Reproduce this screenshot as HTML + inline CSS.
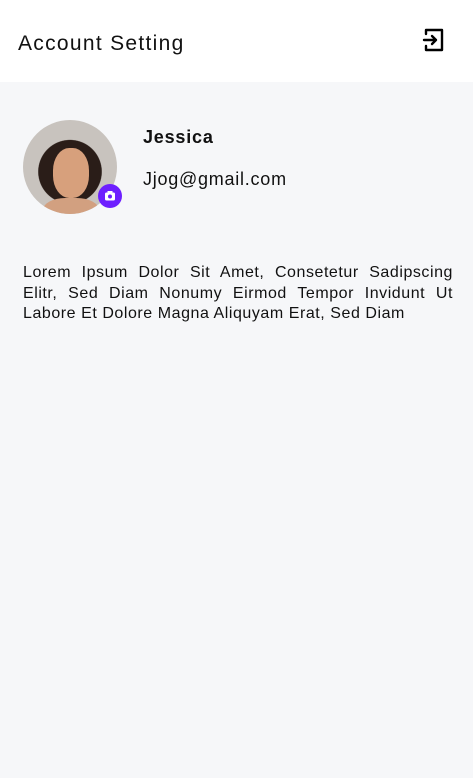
<!DOCTYPE html>
<html><head><style>
body{margin:0;width:473px;height:778px;background:#f6f7f9;font-family:"Liberation Sans",sans-serif;color:#111;position:relative;overflow:hidden}
.hdr{position:absolute;left:0;top:0;width:473px;height:82px;background:#fff}
.t{position:absolute;left:18px;top:32px;font-size:21px;letter-spacing:1.3px}
.av{position:absolute;left:23px;top:120px;width:94px;height:94px;border-radius:50%;background:radial-gradient(circle at 50% 55%,#d9a37f 0 22%,#2a1d18 23% 45%,#c8c3be 46%);overflow:hidden}
.face{position:absolute;left:30px;top:28px;width:36px;height:50px;border-radius:45%;background:#d7a07c}
.body{position:absolute;left:20px;top:78px;width:56px;height:30px;background:#d2a080;border-radius:40%}
.cam{position:absolute;left:98px;top:184px;width:24px;height:24px;border-radius:50%;background:#6d1fff}
.n{position:absolute;left:143px;top:127px;font-size:18px;font-weight:bold;letter-spacing:0.8px}
.e{position:absolute;left:143px;top:169px;font-size:18px;letter-spacing:0.75px}
.p{position:absolute;left:23px;top:263px;width:430px;font-size:16px;line-height:20.5px;text-align:justify;letter-spacing:0.55px}
</style></head><body>
<div class="hdr"><div class="t">Account Setting</div>
<svg style="position:absolute;left:422px;top:26px" width="26" height="28" viewBox="0 0 26 28" fill="none" stroke="#000" stroke-width="2.4" stroke-linecap="round" stroke-linejoin="round"><path d="M4 8V4h16v20H4v-4"/><path d="M2 14h12M10 10l4 4-4 4"/></svg></div>
<div class="av"><div class="body"></div><div class="face"></div></div>
<div class="cam"><svg width="24" height="24" viewBox="0 0 24 24"><rect x="7" y="8.5" width="10" height="8" rx="1.5" fill="#fff"/><rect x="9.5" y="7" width="5" height="2" fill="#fff"/><circle cx="12" cy="12.5" r="2" fill="#6d1fff"/></svg></div>
<div class="n">Jessica</div>
<div class="e">Jjog@gmail.com</div>
<div class="p">Lorem Ipsum Dolor Sit Amet, Consetetur Sadipscing Elitr, Sed Diam Nonumy Eirmod Tempor Invidunt Ut Labore Et Dolore Magna Aliquyam Erat, Sed Diam</div>
</body></html>
